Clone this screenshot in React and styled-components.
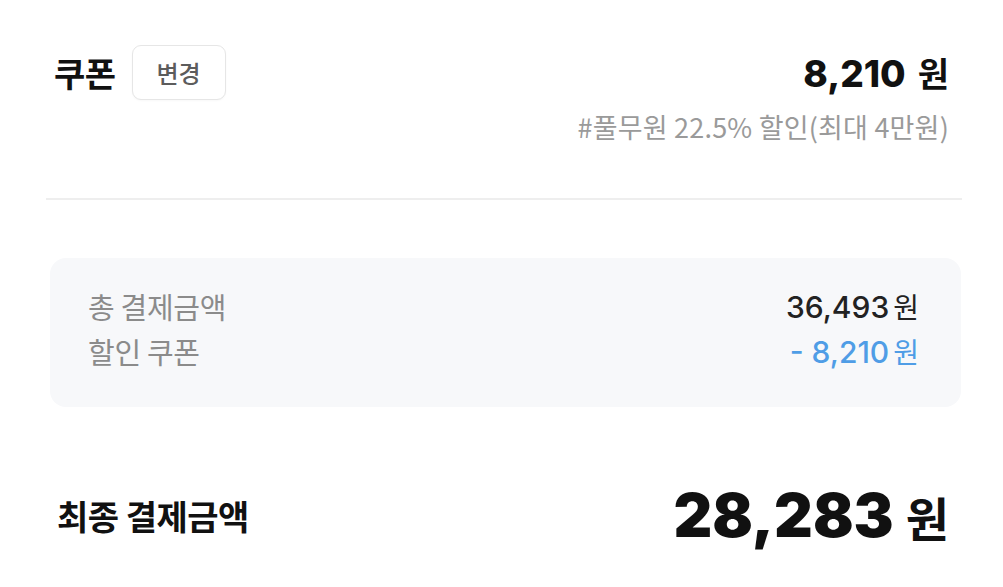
import React from 'react';
import styled, { createGlobalStyle } from 'styled-components';

const GlobalStyle = createGlobalStyle`
    body {
        margin: 0;
        background: #ffffff;
        font-family: "Noto Sans CJK KR", "Noto Sans", sans-serif;
        -webkit-font-smoothing: antialiased;
    }
`;

const Page = styled.div`
    width: 1003px;
    box-sizing: border-box;
    padding: 45px 41px 0 46px;
`;

const CouponRow = styled.div`
    display: flex;
    align-items: center;
    justify-content: space-between;
    height: 55px;
    padding: 0 13px 0 8px;
`;

const TitleGroup = styled.div`
    display: flex;
    align-items: center;
    gap: 16px;
`;

const Title = styled.span`
    font-size: 34px;
    font-weight: 700;
    color: #111;
    letter-spacing: -0.5px;
`;

const ChangeButton = styled.button`
    width: 94px;
    height: 55px;
    border: 1px solid #e6e6e6;
    border-radius: 9px;
    background: #fff;
    font-family: "Noto Sans CJK KR", sans-serif;
    font-size: 24px;
    font-weight: 500;
    color: #5c5c5c;
    box-shadow: 0 1px 2px rgba(0, 0, 0, 0.03);
`;

const Amount = styled.div`
    display: flex;
    align-items: baseline;
    gap: ${p => p.$gap || 10}px;
    color: ${p => p.$color || '#111'};
`;

const Number = styled.span`
    font-family: Inter, "Liberation Sans", sans-serif;
    font-size: ${p => p.$size}px;
    font-weight: ${p => p.$weight || 800};
`;

const Unit = styled.span`
    font-family: "Noto Sans CJK KR", sans-serif;
    font-size: ${p => p.$size}px;
    font-weight: ${p => p.$weight || 700};
`;

const Note = styled.div`
    margin-top: 12px;
    padding-right: 13px;
    text-align: right;
    font-size: 27px;
    line-height: 30px;
    color: #9a9a9a;
    letter-spacing: 0.2px;
`;

const Divider = styled.hr`
    margin: 56px 0 0;
    border: none;
    height: 2px;
    background: #eeeeee;
`;

const SummaryBox = styled.div`
    margin: 58px 1px 0 4px;
    padding: 25px 42px 34px 38px;
    border-radius: 16px;
    background: #f7f8fa;
`;

const SummaryRow = styled.div`
    display: flex;
    align-items: center;
    justify-content: space-between;
    height: 45px;
`;

const Label = styled.span`
    font-size: 29px;
    color: #8b8b8b;
    letter-spacing: -0.3px;
`;

const FinalRow = styled.div`
    display: flex;
    align-items: center;
    justify-content: space-between;
    height: 70px;
    margin-top: 73px;
    padding: 0 13px 0 11px;
`;

const FinalLabel = styled.span`
    font-size: 34px;
    font-weight: 700;
    color: #111;
    letter-spacing: -0.5px;
`;

export default function App () {
    return (
        <Page>
            <GlobalStyle/>
            <CouponRow>
                <TitleGroup>
                    <Title>쿠폰</Title>
                    <ChangeButton>변경</ChangeButton>
                </TitleGroup>
                <Amount $gap={ 12 }>
                    <Number $size={ 37 }>8,210</Number>
                    <Unit $size={ 34 }>원</Unit>
                </Amount>
            </CouponRow>
            <Note>#풀무원 22.5% 할인(최대 4만원)</Note>
            <Divider/>
            <SummaryBox>
                <SummaryRow>
                    <Label>총 결제금액</Label>
                    <Amount $gap={ 4 } $color="#222">
                        <Number $size={ 30 } $weight={ 500 }>36,493</Number>
                        <Unit $size={ 28 } $weight={ 400 }>원</Unit>
                    </Amount>
                </SummaryRow>
                <SummaryRow>
                    <Label>할인 쿠폰</Label>
                    <Amount $gap={ 4 } $color="#4f9de6">
                        <Number $size={ 30 } $weight={ 500 }>- 8,210</Number>
                        <Unit $size={ 28 } $weight={ 400 }>원</Unit>
                    </Amount>
                </SummaryRow>
            </SummaryBox>
            <FinalRow>
                <FinalLabel>최종 결제금액</FinalLabel>
                <Amount $gap={ 12 }>
                    <Number $size={ 60 } $weight={ 900 }>28,283</Number>
                    <Unit $size={ 47 } $weight={ 700 }>원</Unit>
                </Amount>
            </FinalRow>
        </Page>
    );
}
